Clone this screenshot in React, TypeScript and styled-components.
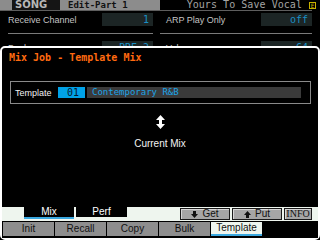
import styled, { createGlobalStyle } from "styled-components";

const GlobalStyle = createGlobalStyle`
	html, body {
		margin: 0;
		padding: 0;
		background: #000;
	}
	body {
		width: 320px;
		height: 240px;
		overflow: hidden;
		font-family: "Liberation Sans", Arial, sans-serif;
	}
`;

const mono = `"DejaVu Sans Mono", "Liberation Mono", monospace`;

const Screen = styled.div`
	position: relative;
	width: 320px;
	height: 240px;
	background: #000;
	overflow: hidden;
`;

const Header = styled.div`
	display: flex;
	align-items: stretch;
	height: 10px;
	line-height: 10px;
`;

const ModeTab = styled.div`
	width: 48px;
	margin-left: 12px;
	padding-left: 3px;
	box-sizing: border-box;
	background: #151515;
	color: #b8b8b8;
	font-family: "DejaVu Sans", sans-serif;
	font-weight: bold;
	font-size: 10px;
	box-shadow: -12px 0 0 #8c8c8c;
`;

const PageTitle = styled.div`
	width: 100px;
	padding-left: 8px;
	box-sizing: border-box;
	background: #8c8c8c;
	color: #111;
	font-family: ${mono};
	font-weight: bold;
	font-size: 9px;
`;

const SongName = styled.div`
	flex: 1;
	text-align: right;
	padding-right: 7px;
	color: #a4a4a4;
	font-family: ${mono};
	font-size: 10px;
	letter-spacing: 0.05px;
`;

const EditMark = styled.div`
	width: 7px;
	height: 7px;
	margin: 2px 4px 0 0;
	box-sizing: border-box;
	border: 1px solid #c8b000;
	color: #c8b000;
	font-family: ${mono};
	font-size: 6px;
	line-height: 5px;
	text-align: center;
`;

const HeaderRule = styled.div`
	width: 312px;
	height: 1px;
	background: #5e5e5e;
`;

const ParamGrid = styled.div`
	display: grid;
	grid-template-columns: 145px 152px;
	column-gap: 7px;
	row-gap: 7px;
	padding: 2px 0 0 8px;
`;

const ParamCell = styled.div<{ $indent?: number }>`
	display: flex;
	align-items: center;
	justify-content: space-between;
	padding: 0 0 7px ${(p) => p.$indent ?? 0}px;
	border-bottom: 1px solid #7a7a7a;
`;

const ParamLabel = styled.span`
	color: #c4c4c4;
	font-size: 9px;
`;

const ValueBox = styled.div`
	width: 51px;
	height: 13px;
	padding-right: 4px;
	box-sizing: border-box;
	background: #1c2525;
	color: #1a90c4;
	font-family: ${mono};
	font-size: 10px;
	line-height: 13px;
	text-align: right;
`;

const Dialog = styled.div`
	position: absolute;
	left: 0;
	top: 46px;
	width: 320px;
	height: 194px;
	box-sizing: border-box;
	border: 2px solid #fff;
	border-radius: 5px;
	background: #000;
	display: flex;
	flex-direction: column;
`;

const DialogTitle = styled.div`
	margin: 4px 0 0 7px;
	color: #ff6a10;
	font-family: ${mono};
	font-weight: bold;
	font-size: 10px;
	line-height: 12px;
`;

const TemplateBox = styled.div`
	display: flex;
	align-items: center;
	width: 301px;
	height: 23px;
	margin: 17px 0 0 8px;
	padding-left: 4px;
	box-sizing: border-box;
	border: 1px solid #8a8a8a;
`;

const FieldLabel = styled.span`
	width: 43px;
	color: #f2f2f2;
	font-size: 9px;
`;

const NumberCell = styled.div`
	width: 27px;
	height: 11px;
	padding-right: 6px;
	box-sizing: border-box;
	background: #00a2e8;
	color: #06182c;
	font-family: ${mono};
	font-size: 10px;
	line-height: 11px;
	text-align: right;
`;

const NameCell = styled.div`
	width: 214px;
	height: 11px;
	margin-left: 2px;
	padding-left: 5px;
	box-sizing: border-box;
	background: #3a3a3a;
	color: #1ca4e8;
	font-family: ${mono};
	font-size: 9px;
	line-height: 11px;
`;

const ArrowWrap = styled.div`
	display: flex;
	justify-content: center;
	margin-top: 11px;
	padding-right: 0;
`;

const Caption = styled.div`
	margin-top: 9px;
	text-align: center;
	color: #f4f4f4;
	font-size: 10px;
	line-height: 12px;
`;

const Spacer = styled.div`
	flex: 1;
`;

const TabStrip = styled.div`
	display: flex;
	align-items: flex-start;
	height: 14px;
	padding: 0 6px 0 22px;
	background: #eef5ee;
`;

const ViewTab = styled.div<{ $active?: boolean }>`
	width: ${(p) => (p.$active ? 50 : 51)}px;
	height: 10px;
	margin-left: ${(p) => (p.$active ? 0 : 2)}px;
	background: #000;
	border-bottom: ${(p) => (p.$active ? "2px solid #3aa8e0" : "none")};
	color: #fff;
	font-size: 10px;
	line-height: 10px;
	text-align: center;
`;

const ActionButton = styled.div<{ $w: number; $first?: boolean }>`
	display: flex;
	align-items: center;
	justify-content: center;
	gap: 4px;
	width: ${(p) => p.$w}px;
	height: 12px;
	margin-top: 1px;
	margin-left: ${(p) => (p.$first ? "auto" : "2px")};
	box-sizing: border-box;
	border: 1px solid #1a1a1a;
	background: #a6a6a6;
	box-shadow: inset 1px 1px 0 #d6d6d6;
	color: #111;
	font-size: 10px;
	line-height: 10px;
`;

const InfoText = styled.span`
	font-family: "Liberation Serif", serif;
	font-size: 10px;
`;

const FunctionRow = styled.div`
	display: flex;
	gap: 1px;
	height: 17px;
	padding: 1px 0 0 1px;
	box-sizing: border-box;
	background: #000;
`;

const FunctionKey = styled.div<{ $w: number; $active?: boolean }>`
	width: ${(p) => p.$w}px;
	height: ${(p) => (p.$active ? 12 : 14)}px;
	background: ${(p) => (p.$active ? "#eef5ee" : "#8e8e8e")};
	border-bottom: ${(p) => (p.$active ? "2px solid #3aa8e0" : "none")};
	color: #111;
	font-size: 10px;
	line-height: ${(p) => (p.$active ? 12 : 14)}px;
	text-align: center;
`;

function UpDownArrow() {
	return (
		<svg width="9" height="14" viewBox="0 0 9 14">
			<path d="M4.5 0 L9 5 L6 5 L6 9 L9 9 L4.5 14 L0 9 L3 9 L3 5 L0 5 Z" fill="#fff" />
		</svg>
	);
}

function SmallArrow({ down }: { down?: boolean }) {
	return (
		<svg width="7" height="7" viewBox="0 0 7 7" style={{ transform: down ? "none" : "rotate(180deg)" }}>
			<path d="M2 0 H5 V3 H7 L3.5 7 L0 3 H2 Z" fill="#111" />
		</svg>
	);
}

const params = [
	{ label: "Receive Channel", value: "1" },
	{ label: "ARP Play Only", value: "off" },
	{ label: "Bank", value: "PRE 2" },
	{ label: "Volume", value: "64" },
];

const functionKeys = [
	{ label: "Init", w: 51 },
	{ label: "Recall", w: 51 },
	{ label: "Copy", w: 51 },
	{ label: "Bulk", w: 51 },
	{ label: "Template", w: 51, active: true },
];

export default function App() {
	return (
		<>
			<GlobalStyle />
			<Screen>
				<Header>
					<ModeTab>SONG</ModeTab>
					<PageTitle>Edit-Part 1</PageTitle>
					<SongName>Yours To Save Vocal</SongName>
					<EditMark>E</EditMark>
				</Header>
				<HeaderRule />
				<ParamGrid>
					{params.map((p, i) => (
						<ParamCell key={p.label} $indent={i % 2 ? 6 : 0}>
							<ParamLabel>{p.label}</ParamLabel>
							<ValueBox>{p.value}</ValueBox>
						</ParamCell>
					))}
				</ParamGrid>

				<Dialog>
					<DialogTitle>Mix Job - Template Mix</DialogTitle>
					<TemplateBox>
						<FieldLabel>Template</FieldLabel>
						<NumberCell>01</NumberCell>
						<NameCell>Contemporary R&amp;B</NameCell>
					</TemplateBox>
					<ArrowWrap>
						<UpDownArrow />
					</ArrowWrap>
					<Caption>Current Mix</Caption>
					<Spacer />
					<TabStrip>
						<ViewTab $active>Mix</ViewTab>
						<ViewTab>Perf</ViewTab>
						<ActionButton $w={50} $first>
							<SmallArrow down />
							<span>Get</span>
						</ActionButton>
						<ActionButton $w={50}>
							<SmallArrow />
							<span>Put</span>
						</ActionButton>
						<ActionButton $w={28}>
							<InfoText>INFO</InfoText>
						</ActionButton>
					</TabStrip>
					<FunctionRow>
						{functionKeys.map((k) => (
							<FunctionKey key={k.label} $w={k.w} $active={k.active}>
								{k.label}
							</FunctionKey>
						))}
					</FunctionRow>
				</Dialog>
			</Screen>
		</>
	);
}
